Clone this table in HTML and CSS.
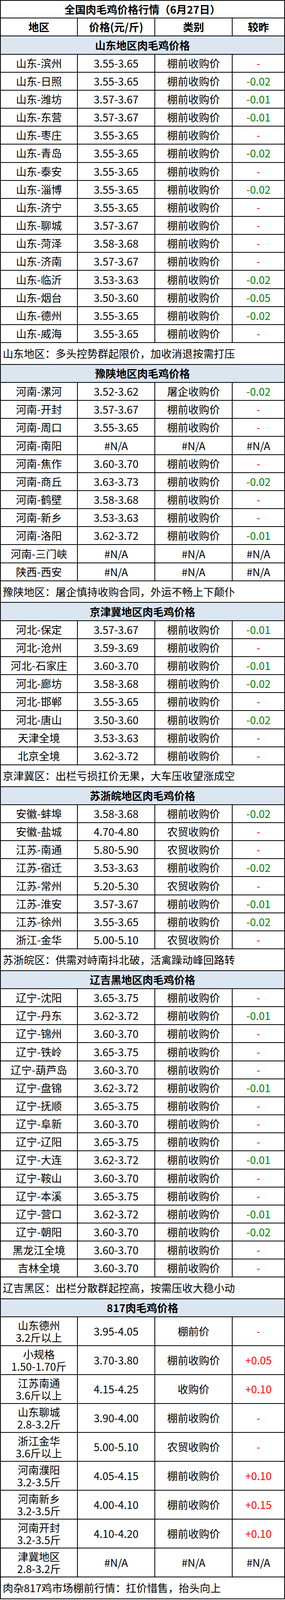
FILE: index.html
```html
<!DOCTYPE html>
<html lang="zh-CN">
<head>
<meta charset="utf-8">
<title>全国肉毛鸡价格行情</title>
<link rel="stylesheet" href="styles.css">
</head>
<body>
<div class="sheet">
  <div class="row title-row"><div class="cell full bold">全国肉毛鸡价格行情（6月27日）</div></div>
  <div class="row"><div class="cell c1 bold">地区</div><div class="cell c2 bold">价格(元/斤)</div><div class="cell c3 bold">类别</div><div class="cell c4 bold">较昨</div></div>

  <div class="row sec"><div class="cell full bold">山东地区肉毛鸡价格</div></div>
  <div class="row"><div class="cell c1">山东-滨州</div><div class="cell c2">3.55-3.65</div><div class="cell c3">棚前收购价</div><div class="cell c4 up">-</div></div>
  <div class="row"><div class="cell c1">山东-日照</div><div class="cell c2">3.55-3.65</div><div class="cell c3">棚前收购价</div><div class="cell c4 dn">-0.02</div></div>
  <div class="row"><div class="cell c1">山东-潍坊</div><div class="cell c2">3.57-3.67</div><div class="cell c3">棚前收购价</div><div class="cell c4 dn">-0.01</div></div>
  <div class="row"><div class="cell c1">山东-东营</div><div class="cell c2">3.57-3.67</div><div class="cell c3">棚前收购价</div><div class="cell c4 dn">-0.01</div></div>
  <div class="row"><div class="cell c1">山东-枣庄</div><div class="cell c2">3.55-3.65</div><div class="cell c3">棚前收购价</div><div class="cell c4 up">-</div></div>
  <div class="row"><div class="cell c1">山东-青岛</div><div class="cell c2">3.55-3.65</div><div class="cell c3">棚前收购价</div><div class="cell c4 dn">-0.02</div></div>
  <div class="row"><div class="cell c1">山东-泰安</div><div class="cell c2">3.55-3.65</div><div class="cell c3">棚前收购价</div><div class="cell c4 up">-</div></div>
  <div class="row"><div class="cell c1">山东-淄博</div><div class="cell c2">3.55-3.65</div><div class="cell c3">棚前收购价</div><div class="cell c4 dn">-0.02</div></div>
  <div class="row"><div class="cell c1">山东-济宁</div><div class="cell c2">3.55-3.65</div><div class="cell c3">棚前收购价</div><div class="cell c4 up">-</div></div>
  <div class="row"><div class="cell c1">山东-聊城</div><div class="cell c2">3.57-3.67</div><div class="cell c3">棚前收购价</div><div class="cell c4 up">-</div></div>
  <div class="row"><div class="cell c1">山东-菏泽</div><div class="cell c2">3.58-3.68</div><div class="cell c3">棚前收购价</div><div class="cell c4 up">-</div></div>
  <div class="row"><div class="cell c1">山东-济南</div><div class="cell c2">3.57-3.67</div><div class="cell c3">棚前收购价</div><div class="cell c4 up">-</div></div>
  <div class="row"><div class="cell c1">山东-临沂</div><div class="cell c2">3.53-3.63</div><div class="cell c3">棚前收购价</div><div class="cell c4 dn">-0.02</div></div>
  <div class="row"><div class="cell c1">山东-烟台</div><div class="cell c2">3.50-3.60</div><div class="cell c3">棚前收购价</div><div class="cell c4 dn">-0.05</div></div>
  <div class="row"><div class="cell c1">山东-德州</div><div class="cell c2">3.55-3.65</div><div class="cell c3">棚前收购价</div><div class="cell c4 dn">-0.02</div></div>
  <div class="row"><div class="cell c1">山东-威海</div><div class="cell c2">3.55-3.65</div><div class="cell c3">棚前收购价</div><div class="cell c4 up">-</div></div>
  <div class="row note"><div class="cell full">山东地区：多头控势群起限价，加收消退按需打压</div></div>

  <div class="row sec"><div class="cell full bold">豫陕地区肉毛鸡价格</div></div>
  <div class="row"><div class="cell c1">河南-漯河</div><div class="cell c2">3.52-3.62</div><div class="cell c3">屠企收购价</div><div class="cell c4 dn">-0.02</div></div>
  <div class="row"><div class="cell c1">河南-开封</div><div class="cell c2">3.57-3.67</div><div class="cell c3">棚前收购价</div><div class="cell c4 up">-</div></div>
  <div class="row"><div class="cell c1">河南-周口</div><div class="cell c2">3.55-3.65</div><div class="cell c3">棚前收购价</div><div class="cell c4 up">-</div></div>
  <div class="row"><div class="cell c1">河南-南阳</div><div class="cell c2">#N/A</div><div class="cell c3">#N/A</div><div class="cell c4">#N/A</div></div>
  <div class="row"><div class="cell c1">河南-焦作</div><div class="cell c2">3.60-3.70</div><div class="cell c3">棚前收购价</div><div class="cell c4 up">-</div></div>
  <div class="row"><div class="cell c1">河南-商丘</div><div class="cell c2">3.63-3.73</div><div class="cell c3">棚前收购价</div><div class="cell c4 dn">-0.02</div></div>
  <div class="row"><div class="cell c1">河南-鹤壁</div><div class="cell c2">3.58-3.68</div><div class="cell c3">棚前收购价</div><div class="cell c4 up">-</div></div>
  <div class="row"><div class="cell c1">河南-新乡</div><div class="cell c2">3.53-3.63</div><div class="cell c3">棚前收购价</div><div class="cell c4 up">-</div></div>
  <div class="row"><div class="cell c1">河南-洛阳</div><div class="cell c2">3.62-3.72</div><div class="cell c3">棚前收购价</div><div class="cell c4 dn">-0.01</div></div>
  <div class="row"><div class="cell c1">河南-三门峡</div><div class="cell c2">#N/A</div><div class="cell c3">#N/A</div><div class="cell c4">#N/A</div></div>
  <div class="row"><div class="cell c1">陕西-西安</div><div class="cell c2">#N/A</div><div class="cell c3">#N/A</div><div class="cell c4">#N/A</div></div>
  <div class="row note"><div class="cell full">豫陕地区：屠企慎持收购合同，外运不畅上下颠仆</div></div>

  <div class="row sec"><div class="cell full bold">京津冀地区肉毛鸡价格</div></div>
  <div class="row"><div class="cell c1">河北-保定</div><div class="cell c2">3.57-3.67</div><div class="cell c3">棚前收购价</div><div class="cell c4 dn">-0.01</div></div>
  <div class="row"><div class="cell c1">河北-沧州</div><div class="cell c2">3.59-3.69</div><div class="cell c3">棚前收购价</div><div class="cell c4 up">-</div></div>
  <div class="row"><div class="cell c1">河北-石家庄</div><div class="cell c2">3.60-3.70</div><div class="cell c3">棚前收购价</div><div class="cell c4 dn">-0.01</div></div>
  <div class="row"><div class="cell c1">河北-廊坊</div><div class="cell c2">3.58-3.68</div><div class="cell c3">棚前收购价</div><div class="cell c4 dn">-0.02</div></div>
  <div class="row"><div class="cell c1">河北-邯郸</div><div class="cell c2">3.55-3.65</div><div class="cell c3">棚前收购价</div><div class="cell c4 up">-</div></div>
  <div class="row"><div class="cell c1">河北-唐山</div><div class="cell c2">3.50-3.60</div><div class="cell c3">棚前收购价</div><div class="cell c4 dn">-0.02</div></div>
  <div class="row"><div class="cell c1">天津全境</div><div class="cell c2">3.53-3.63</div><div class="cell c3">棚前收购价</div><div class="cell c4 up">-</div></div>
  <div class="row"><div class="cell c1">北京全境</div><div class="cell c2">3.62-3.72</div><div class="cell c3">棚前收购价</div><div class="cell c4 up">-</div></div>
  <div class="row note"><div class="cell full">京津冀区：出栏亏损扛价无果，大车压收望涨成空</div></div>

  <div class="row sec"><div class="cell full bold">苏浙皖地区肉毛鸡价格</div></div>
  <div class="row"><div class="cell c1">安徽-蚌埠</div><div class="cell c2">3.58-3.68</div><div class="cell c3">棚前收购价</div><div class="cell c4 dn">-0.02</div></div>
  <div class="row"><div class="cell c1">安徽-盐城</div><div class="cell c2">4.70-4.80</div><div class="cell c3">农贸收购价</div><div class="cell c4 up">-</div></div>
  <div class="row"><div class="cell c1">江苏-南通</div><div class="cell c2">5.80-5.90</div><div class="cell c3">农贸收购价</div><div class="cell c4 up">-</div></div>
  <div class="row"><div class="cell c1">江苏-宿迁</div><div class="cell c2">3.53-3.63</div><div class="cell c3">棚前收购价</div><div class="cell c4 dn">-0.02</div></div>
  <div class="row"><div class="cell c1">江苏-常州</div><div class="cell c2">5.20-5.30</div><div class="cell c3">农贸收购价</div><div class="cell c4 up">-</div></div>
  <div class="row"><div class="cell c1">江苏-淮安</div><div class="cell c2">3.57-3.67</div><div class="cell c3">棚前收购价</div><div class="cell c4 dn">-0.01</div></div>
  <div class="row"><div class="cell c1">江苏-徐州</div><div class="cell c2">3.55-3.65</div><div class="cell c3">棚前收购价</div><div class="cell c4 dn">-0.02</div></div>
  <div class="row"><div class="cell c1">浙江-金华</div><div class="cell c2">5.00-5.10</div><div class="cell c3">农贸收购价</div><div class="cell c4 up">-</div></div>
  <div class="row note"><div class="cell full">苏浙皖区：供需对峙南抖北破，活禽躁动峰回路转</div></div>

  <div class="row sec"><div class="cell full bold">辽吉黑地区肉毛鸡价格</div></div>
  <div class="row"><div class="cell c1">辽宁-沈阳</div><div class="cell c2">3.65-3.75</div><div class="cell c3">棚前收购价</div><div class="cell c4 up">-</div></div>
  <div class="row"><div class="cell c1">辽宁-丹东</div><div class="cell c2">3.62-3.72</div><div class="cell c3">棚前收购价</div><div class="cell c4 dn">-0.01</div></div>
  <div class="row"><div class="cell c1">辽宁-锦州</div><div class="cell c2">3.60-3.70</div><div class="cell c3">棚前收购价</div><div class="cell c4 up">-</div></div>
  <div class="row"><div class="cell c1">辽宁-铁岭</div><div class="cell c2">3.65-3.75</div><div class="cell c3">棚前收购价</div><div class="cell c4 up">-</div></div>
  <div class="row"><div class="cell c1">辽宁-葫芦岛</div><div class="cell c2">3.60-3.70</div><div class="cell c3">棚前收购价</div><div class="cell c4 up">-</div></div>
  <div class="row"><div class="cell c1">辽宁-盘锦</div><div class="cell c2">3.62-3.72</div><div class="cell c3">棚前收购价</div><div class="cell c4 dn">-0.01</div></div>
  <div class="row"><div class="cell c1">辽宁-抚顺</div><div class="cell c2">3.65-3.75</div><div class="cell c3">棚前收购价</div><div class="cell c4 up">-</div></div>
  <div class="row"><div class="cell c1">辽宁-阜新</div><div class="cell c2">3.60-3.70</div><div class="cell c3">棚前收购价</div><div class="cell c4 up">-</div></div>
  <div class="row"><div class="cell c1">辽宁-辽阳</div><div class="cell c2">3.65-3.75</div><div class="cell c3">棚前收购价</div><div class="cell c4 up">-</div></div>
  <div class="row"><div class="cell c1">辽宁-大连</div><div class="cell c2">3.62-3.72</div><div class="cell c3">棚前收购价</div><div class="cell c4 dn">-0.01</div></div>
  <div class="row"><div class="cell c1">辽宁-鞍山</div><div class="cell c2">3.60-3.70</div><div class="cell c3">棚前收购价</div><div class="cell c4 up">-</div></div>
  <div class="row"><div class="cell c1">辽宁-本溪</div><div class="cell c2">3.65-3.75</div><div class="cell c3">棚前收购价</div><div class="cell c4 up">-</div></div>
  <div class="row"><div class="cell c1">辽宁-营口</div><div class="cell c2">3.62-3.72</div><div class="cell c3">棚前收购价</div><div class="cell c4 dn">-0.01</div></div>
  <div class="row"><div class="cell c1">辽宁-朝阳</div><div class="cell c2">3.60-3.70</div><div class="cell c3">棚前收购价</div><div class="cell c4 dn">-0.02</div></div>
  <div class="row"><div class="cell c1">黑龙江全境</div><div class="cell c2">3.60-3.70</div><div class="cell c3">棚前收购价</div><div class="cell c4 up">-</div></div>
  <div class="row"><div class="cell c1">吉林全境</div><div class="cell c2">3.60-3.70</div><div class="cell c3">棚前收购价</div><div class="cell c4 up">-</div></div>
  <div class="row note"><div class="cell full">辽吉黑区：出栏分散群起控高，按需压收大稳小动</div></div>

  <div class="row sec"><div class="cell full bold">817肉毛鸡价格</div></div>
  <div class="row dbl"><div class="cell c1 two"><span>山东德州</span><span>3.2斤以上</span></div><div class="cell c2">3.95-4.05</div><div class="cell c3">棚前价</div><div class="cell c4 up">-</div></div>
  <div class="row dbl"><div class="cell c1 two"><span>小规格</span><span>1.50-1.70斤</span></div><div class="cell c2">3.70-3.80</div><div class="cell c3">棚前收购价</div><div class="cell c4 up">+0.05</div></div>
  <div class="row dbl"><div class="cell c1 two"><span>江苏南通</span><span>3.6斤以上</span></div><div class="cell c2">4.15-4.25</div><div class="cell c3">收购价</div><div class="cell c4 up">+0.10</div></div>
  <div class="row dbl"><div class="cell c1 two"><span>山东聊城</span><span>2.8-3.2斤</span></div><div class="cell c2">3.90-4.00</div><div class="cell c3">棚前收购价</div><div class="cell c4 up">-</div></div>
  <div class="row dbl"><div class="cell c1 two"><span>浙江金华</span><span>3.6斤以上</span></div><div class="cell c2">5.00-5.10</div><div class="cell c3">农贸收购价</div><div class="cell c4 up">-</div></div>
  <div class="row dbl"><div class="cell c1 two"><span>河南濮阳</span><span>3.2-3.5斤</span></div><div class="cell c2">4.05-4.15</div><div class="cell c3">棚前收购价</div><div class="cell c4 up">+0.10</div></div>
  <div class="row dbl"><div class="cell c1 two"><span>河南新乡</span><span>3.2-3.5斤</span></div><div class="cell c2">4.00-4.10</div><div class="cell c3">棚前收购价</div><div class="cell c4 up">+0.15</div></div>
  <div class="row dbl"><div class="cell c1 two"><span>河南开封</span><span>3.2-3.5斤</span></div><div class="cell c2">4.10-4.20</div><div class="cell c3">棚前收购价</div><div class="cell c4 up">+0.10</div></div>
  <div class="row dbl"><div class="cell c1 two"><span>津冀地区</span><span>2.8-3.2斤</span></div><div class="cell c2">#N/A</div><div class="cell c3">#N/A</div><div class="cell c4">#N/A</div></div>
  <div class="row note"><div class="cell full">肉杂817鸡市场棚前行情：扛价惜售，抬头向上</div></div>
</div>
</body>
</html>
```

FILE: styles.css
```css
html, body {
  margin: 0;
  padding: 0;
  background: #ffffff;
}

body {
  font-family: "Noto Sans CJK SC", "Noto Sans", sans-serif;
  color: #000000;
}

/* The capture area is about 4096px tall, so the reference rhythm
   (53 / 64 / 85px rows) is kept proportionally, scaled to fit. */
.sheet {
  width: 729px;
  box-sizing: border-box;
  border-top: 2px solid #000000;
  border-left: 2px solid #000000;
}

.row {
  display: flex;
  height: 46.16px;
  box-sizing: border-box;
  border-bottom: 2px solid #000000;
}

.title-row {
  height: 45.3px;
}

.note {
  height: 55.75px;
}

.dbl {
  height: 74px;
}

.sec {
  background: #dce6f1;
}

.cell {
  box-sizing: border-box;
  border-right: 2px solid #000000;
  display: flex;
  align-items: center;
  justify-content: center;
  font-size: 27px;
  line-height: 30px;
  white-space: nowrap;
}

.c1 { width: 197px; }
.c2 { width: 198px; }
.c3 { width: 198px; }
.c4 { width: 134px; }
.full { width: 727px; }

.note .full {
  justify-content: flex-start;
  padding-left: 5px;
}

.bold {
  font-weight: bold;
}

.two {
  flex-direction: column;
}

.two span {
  display: block;
  line-height: 31px;
}

.up {
  color: #ff0000;
}

.dn {
  color: #008000;
}
```
